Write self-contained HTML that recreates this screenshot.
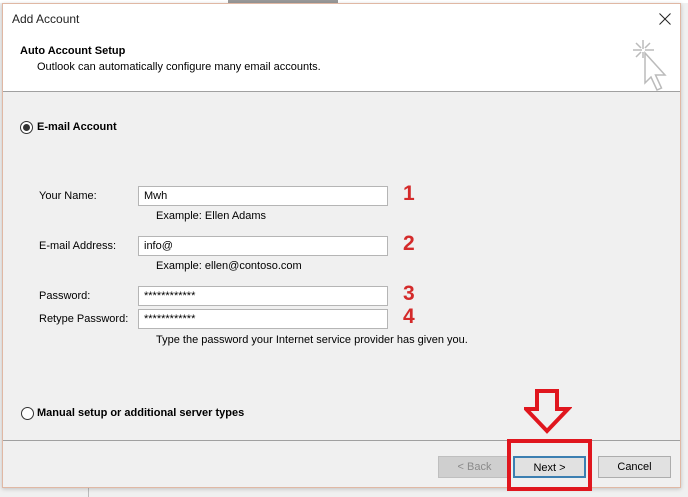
<!DOCTYPE html>
<html><head><meta charset="utf-8"><style>
*{margin:0;padding:0;box-sizing:border-box}
body{width:688px;height:497px;background:#f0f0f0;position:relative;overflow:hidden;font-family:"Liberation Sans",sans-serif;font-size:11px;color:#000}
.abs{position:absolute}
#dlg{left:2px;top:3px;width:679px;height:485px;border:1px solid #e0b8a4;background:#f0f0f0;box-shadow:0 1px 4px rgba(0,0,0,.2)}
#hdr{left:0;top:0;width:677px;height:88px;background:#fff;border-bottom:1px solid #a0a0a0}
.inp{height:20px;border:1px solid #b5b5b5;background:#fff;padding:3px 5px;font-size:11px;width:250px}
.num{color:#d42a2a;font-weight:bold;font-size:21px}
.btn{height:22px;border:1px solid #adadad;background:#e1e1e1;text-align:center;line-height:20px;font-size:11px}
.radio{width:13px;height:13px;border:1px solid #333;border-radius:50%;background:#fff}
</style></head><body>
<div class="abs" style="left:0;top:0;width:688px;height:3px;background:#fff"></div>
<div class="abs" style="left:228px;top:0;width:110px;height:3px;background:#999"></div>
<div class="abs" style="left:88px;top:488px;width:1px;height:9px;background:#bbb"></div>
<div class="abs" id="dlg">
 <div class="abs" id="hdr">
  <div class="abs" style="left:9px;top:8px;font-size:12px;color:#222">Add Account</div>
  <svg class="abs" style="left:656px;top:9px" width="12" height="12" viewBox="0 0 12 12"><path d="M0.5 0.5L11.5 11.5M11.5 0.5L0.5 11.5" stroke="#222" stroke-width="1"/></svg>
  <div class="abs" style="left:17px;top:41px;font-weight:bold;font-size:11px">Auto Account Setup</div>
  <div class="abs" style="left:34px;top:57px;font-size:11px">Outlook can automatically configure many email accounts.</div>
  <svg class="abs" style="left:628px;top:34px" width="48" height="56" viewBox="0 0 48 56">
   <g stroke="#bbb" stroke-width="1.5" fill="none">
    <path d="M12 2v9M2 12h9M14 12h9M12 14v6M5 5l5 5M19 5l-5 5M5 19l5-5"/>
    <path d="M14 15l0 30 6-6 6 13 4.5-2-6-13 9.5 0z" fill="#fff"/>
   </g>
  </svg>
 </div>
 <div class="abs radio" style="left:17px;top:117px"><div style="width:7px;height:7px;background:#333;border-radius:50%;margin:2px"></div></div>
 <div class="abs" style="left:34px;top:117px;font-weight:bold">E-mail Account</div>

 <div class="abs" style="left:36px;top:186px">Your Name:</div>
 <div class="abs inp" style="left:135px;top:182px">Mwh</div>
 <div class="abs num" style="left:400px;top:178px">1</div>
 <div class="abs" style="left:153px;top:206px">Example: Ellen Adams</div>

 <div class="abs" style="left:36px;top:236px">E-mail Address:</div>
 <div class="abs inp" style="left:135px;top:232px">info@</div>
 <div class="abs num" style="left:400px;top:228px">2</div>
 <div class="abs" style="left:153px;top:256px">Example: ellen@contoso.com</div>

 <div class="abs" style="left:36px;top:286px">Password:</div>
 <div class="abs inp" style="left:135px;top:282px">************</div>
 <div class="abs num" style="left:400px;top:278px">3</div>
 <div class="abs" style="left:36px;top:309px">Retype Password:</div>
 <div class="abs inp" style="left:135px;top:305px">************</div>
 <div class="abs num" style="left:400px;top:301px">4</div>
 <div class="abs" style="left:153px;top:330px">Type the password your Internet service provider has given you.</div>

 <div class="abs radio" style="left:18px;top:403px"></div>
 <div class="abs" style="left:34px;top:403px;font-weight:bold">Manual setup or additional server types</div>

 <div class="abs" style="left:0;top:436px;width:677px;height:1px;background:#a0a0a0"></div>
 <div class="abs btn" style="left:435px;top:452px;width:73px;color:#8a8a8a;background:#cfcfcf;border-color:#bfbfbf">&lt; Back</div>
 <div class="abs btn" style="left:510px;top:452px;width:73px;border:2px solid #3c7fb1">Next &gt;</div>
 <div class="abs btn" style="left:595px;top:452px;width:73px">Cancel</div>
</div>
<svg class="abs" style="left:524px;top:388px" width="48" height="48" viewBox="0 0 48 48">
 <path d="M13 3h20v18h11L23 43 2 21h11z" fill="none" stroke="#e0161e" stroke-width="4" stroke-linejoin="miter"/>
</svg>
<div class="abs" style="left:507px;top:439px;width:85px;height:52px;border:4px solid #e0161e"></div>
</body></html>
